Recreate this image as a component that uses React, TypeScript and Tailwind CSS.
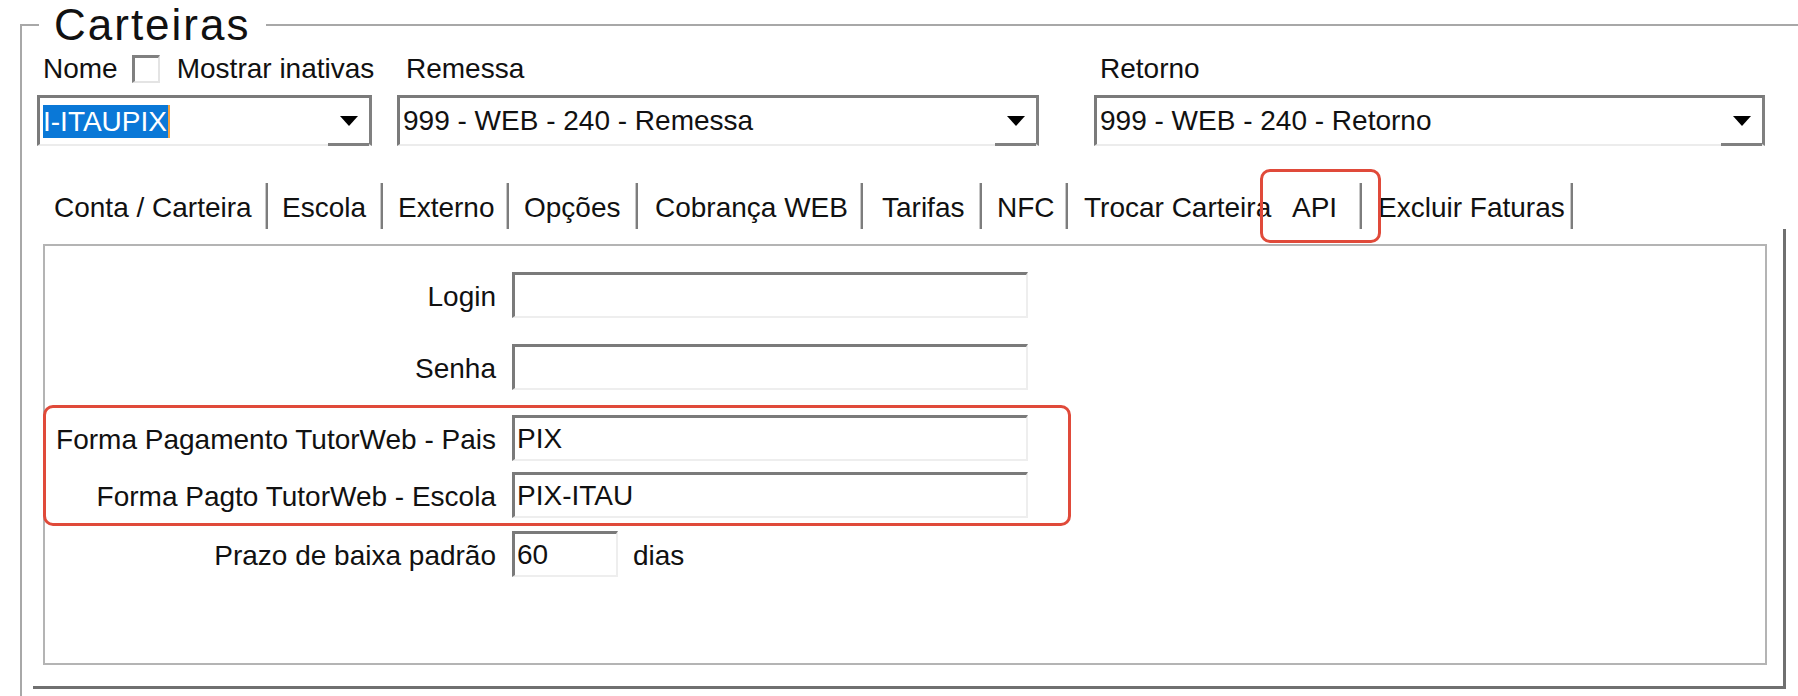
import React from "react";

const font = "font-['Liberation_Sans',Arial,sans-serif]";

const tabs = [
  { label: "Conta / Carteira", w: "w-[214px]", sep: true, gap: "mr-[14px]" },
  { label: "Escola", w: "w-[101px]", sep: true, gap: "mr-[15px]" },
  { label: "Externo", w: "w-[111px]", sep: true, gap: "mr-[15px]" },
  { label: "Opções", w: "w-[114px]", sep: true, gap: "mr-[17px]" },
  { label: "Cobrança WEB", w: "w-[208px]", sep: true, gap: "mr-[19px]" },
  { label: "Tarifas", w: "w-[100px]", sep: true, gap: "mr-[15px]" },
  { label: "NFC", w: "w-[71px]", sep: true, gap: "mr-[16px]" },
  { label: "Trocar Carteira", w: "w-[208px]", sep: false, gap: "" },
  { label: "API", w: "w-[70px]", sep: true, gap: "mr-[16px]" },
  { label: "Excluir Faturas", w: "w-[195px]", sep: true, gap: "" },
];

const sunken =
  "border-t-[3px] border-l-[3px] border-t-[#7a7a7a] border-l-[#7a7a7a] border-r-2 border-b-2 border-r-[#eeeeee] border-b-[#eeeeee] bg-white";

function Arrow() {
  return <span className="w-0 h-0 border-l-[9px] border-r-[9px] border-t-[10px] border-l-transparent border-r-transparent border-t-black" />;
}

function Combo({ w, children }: { w: string; children: React.ReactNode }) {
  return (
    <div
      className={`${w} h-[51px] flex bg-white border-t-[3px] border-l-[3px] border-r-[3px] border-b-2 border-t-[#7a7a7a] border-l-[#7a7a7a] border-r-[#808080] border-b-[#ececec]`}
    >
      <div className="flex-1 flex items-center pl-[3px] overflow-hidden whitespace-nowrap">{children}</div>
      <div className="w-[41px] -mb-[2px] border-b-[3px] border-b-[#808080] flex items-center justify-center">
        <Arrow />
      </div>
    </div>
  );
}

function Field({ label, value = "", top, w = "w-[516px]", suffix }: { label: string; value?: string; top: string; w?: string; suffix?: string }) {
  return (
    <div className={`flex items-center h-[46px] ${top}`}>
      <div className="w-[451px] text-right leading-[32px] pt-[3px] whitespace-nowrap">{label}</div>
      <div className={`ml-[16px] h-[46px] ${w} ${sunken} flex items-center pl-[2px] leading-[32px]`}>{value}</div>
      {suffix && <div className="ml-[15px] leading-[32px] pt-[3px]">{suffix}</div>}
    </div>
  );
}

export default function App() {
  return (
    <div className={`w-[1798px] h-[696px] overflow-hidden bg-white relative text-[28px] text-[#111] ${font}`}>
      <fieldset className="ml-[20px] w-[1790px] h-[760px] border-2 border-[#a8a8a8] p-0 m-0">
        <legend className="ml-[17px] px-[15px] text-[44px] leading-[50px] tracking-[2px] text-[#111]">Carteiras</legend>

        {/* Top row: Nome / Remessa / Retorno */}
        <div className="flex pl-[15px] mt-[3px]">
          <div className="flex flex-col w-[335px]">
            <div className="flex items-center h-[32px] pl-[6px] leading-[32px] whitespace-nowrap">
              <span>Nome</span>
              <span className="ml-[14px] shrink-0 w-[28px] h-[28px] bg-white border-t-[3px] border-l-[3px] border-t-[#808080] border-l-[#808080] border-r-2 border-b-2 border-r-[#e4e4e4] border-b-[#e4e4e4]" />
              <span className="ml-[17px]">Mostrar inativas</span>
            </div>
            <div className="mt-[10px]">
              <Combo w="w-[335px]">
                <span className="bg-[#0a78d7] text-white leading-[33px] pr-[1px] border-r-2 border-r-[#f0a040]">I-ITAUPIX</span>
              </Combo>
            </div>
          </div>

          <div className="flex flex-col w-[642px] ml-[25px]">
            <div className="h-[32px] leading-[32px] pl-[9px]">Remessa</div>
            <div className="mt-[10px]">
              <Combo w="w-[642px]">
                <span className="leading-[32px]">999 - WEB - 240 - Remessa</span>
              </Combo>
            </div>
          </div>

          <div className="flex flex-col w-[671px] ml-[55px]">
            <div className="h-[32px] leading-[32px] pl-[6px]">Retorno</div>
            <div className="mt-[10px]">
              <Combo w="w-[671px]">
                <span className="leading-[32px]">999 - WEB - 240 - Retorno</span>
              </Combo>
            </div>
          </div>
        </div>

        {/* Tab strip */}
        <div className="relative flex h-[46px] mt-[37px] pl-[32px]">
          {tabs.map((t) => (
            <div key={t.label} className={`${t.w} ${t.gap} flex items-stretch justify-between shrink-0`}>
              <span className="leading-[46px] whitespace-nowrap pt-[2px]">{t.label}</span>
              {t.sep && <span className="w-[3px] bg-[#7d7d7d] border-l border-l-[#c8c8c8]" />}
            </div>
          ))}
          <div className="absolute left-[1238px] top-[-14px] w-[121px] h-[74px] border-[3px] border-[#e04a3a] rounded-[10px]" />
        </div>

        {/* Tab page frame */}
        <div className="ml-[11px] w-[1753px] h-[460px] border-r-[3px] border-b-[3px] border-r-[#707070] border-b-[#707070] pl-[10px] pt-[15px]">
          <div className="relative w-[1724px] h-[421px] border-2 border-[#b4b4b4]">
            <Field label="Login" top="mt-[26px]" />
            <Field label="Senha" top="mt-[26px]" />
            <Field label="Forma Pagamento TutorWeb - Pais" value="PIX" top="mt-[25px]" />
            <Field label="Forma Pagto TutorWeb - Escola" value="PIX-ITAU" top="mt-[11px]" />
            <Field label="Prazo de baixa padrão" value="60" top="mt-[13px]" w="w-[106px]" suffix="dias" />
            <div className="absolute left-[-2px] top-[159px] w-[1028px] h-[121px] border-[3px] border-[#e04a3a] rounded-[10px]" />
          </div>
        </div>
      </fieldset>
    </div>
  );
}
